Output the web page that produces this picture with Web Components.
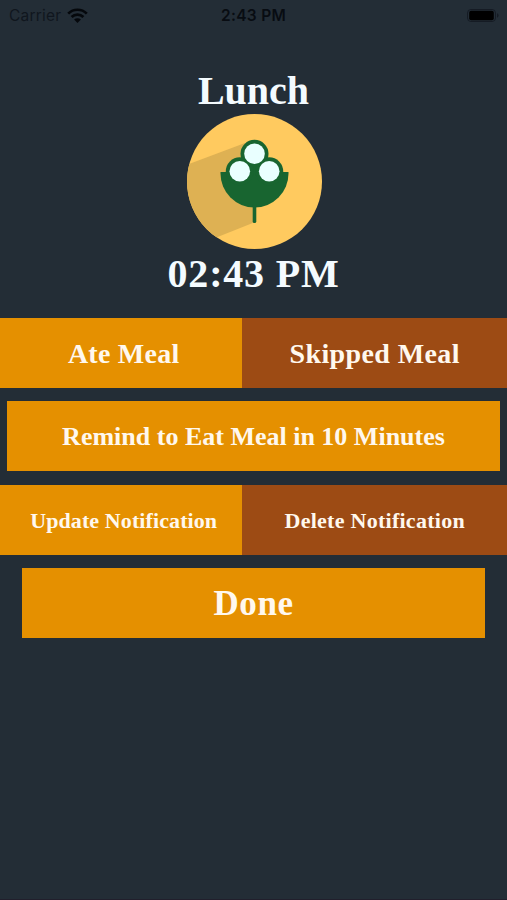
<!DOCTYPE html>
<html lang="en">
<head>
<meta charset="utf-8">
<meta name="viewport" content="width=device-width, initial-scale=1">
<title>Lunch</title>
<style>
    body {
        margin: 0;
        background: #232d36;
        font-family: "Liberation Serif", serif;
    }
</style>
</head>
<body>
<meal-screen>
    <status-bar slot="status" carrier="Carrier" time="2:43 PM"></status-bar>
    <meal-header name="Lunch" time="02:43 PM"><meal-icon></meal-icon></meal-header>
    <button-row>
        <meal-button size="28" spacing="0.25">Ate Meal</meal-button>
        <meal-button size="28" spacing="0.4" kind="danger">Skipped Meal</meal-button>
    </button-row>
    <button-row inset="7.4">
        <meal-button size="26">Remind to Eat Meal in 10 Minutes</meal-button>
    </button-row>
    <button-row>
        <meal-button size="22" spacing="0.1">Update Notification</meal-button>
        <meal-button size="22" spacing="0.27" kind="danger">Delete Notification</meal-button>
    </button-row>
    <button-row inset="22.4">
        <meal-button size="35" spacing="0.6">Done</meal-button>
    </button-row>
</meal-screen>

<script>
class MealScreen extends HTMLElement {
    constructor() {
        super();
        this.attachShadow({ mode: 'open' });
        this.shadowRoot.innerHTML = `
            <style>
                :host {
                    display: flex;
                    flex-direction: column;
                    box-sizing: border-box;
                    height: 100vh;
                    overflow: hidden;
                    border-bottom: 1px solid #211f2c;
                }
                .content {
                    display: flex;
                    flex-direction: column;
                    gap: 13.33px;
                }
            </style>
            <slot name="status"></slot>
            <div class="content"><slot></slot></div>
        `;
    }
}
customElements.define('meal-screen', MealScreen);

class StatusBar extends HTMLElement {
    connectedCallback() {
        this.attachShadow({ mode: 'open' });
        this.shadowRoot.innerHTML = `
            <style>
                :host {
                    display: grid;
                    grid-template-columns: 1fr auto 1fr;
                    align-items: center;
                    height: 30px;
                    box-sizing: border-box;
                    padding: 0 8px 0 9px;
                    font: 15.5px/30px Inter, sans-serif;
                    color: #080c12;
                }
                .carrier { display: flex; align-items: center; gap: 6px; color: #10161e; letter-spacing: 0.2px; }
                .time { font-weight: 600; font-size: 15.5px; letter-spacing: 0.3px; padding: 1px 1px 0 0; }
                .carrier span { padding-top: 1px; }
                .battery { justify-self: end; }
                svg { display: block; }
            </style>
            <div class="carrier">
                <span>${this.getAttribute('carrier')}</span>
                <svg width="21" height="15" viewBox="0 0 21 15">
                    <g fill="none" stroke="#05080c" stroke-width="2.7">
                        <path d="M1.2 5.6a13.2 13.2 0 0 1 18.6 0"/>
                        <path d="M4.6 9a8.4 8.4 0 0 1 11.8 0"/>
                    </g>
                    <path d="M7.1 11.5a4.9 4.9 0 0 1 6.8 0L10.5 14.9z" fill="#05080c"/>
                </svg>
            </div>
            <div class="time">${this.getAttribute('time')}</div>
            <svg class="battery" width="32" height="14" viewBox="0 0 32 14">
                <rect x=".5" y=".5" width="28" height="12" rx="3.5" fill="none" stroke="#151b24"/>
                <rect x="2.2" y="1.7" width="24.6" height="9.6" rx="2" fill="#000"/>
                <path d="M30 4.3v4.4q1.6-.6 1.6-2.2T30 4.3z" fill="#151b24"/>
            </svg>
        `;
    }
}
customElements.define('status-bar', StatusBar);

class MealHeader extends HTMLElement {
    connectedCallback() {
        this.attachShadow({ mode: 'open' });
        this.shadowRoot.innerHTML = `
            <style>
                :host {
                    display: flex;
                    flex-direction: column;
                    align-items: center;
                    box-sizing: border-box;
                    height: 274.67px;
                    padding-top: 38px;
                    color: #f4fbff;
                    font-size: 40px;
                    font-weight: bold;
                    line-height: 46px;
                }
                .time { margin-top: 2px; letter-spacing: 0.8px; }
            </style>
            <div class="name">${this.getAttribute('name')}</div>
            <slot></slot>
            <div class="time">${this.getAttribute('time')}</div>
        `;
    }
}
customElements.define('meal-header', MealHeader);

class MealIcon extends HTMLElement {
    constructor() {
        super();
        this.attachShadow({ mode: 'open' });
        this.shadowRoot.innerHTML = `
            <style>
                :host { display: block; width: 136px; height: 135px; }
                svg { display: block; margin-left: auto; }
            </style>
            <svg width="135" height="135" viewBox="0 0 135 135">
                <clipPath id="disc"><circle cx="67.5" cy="67.5" r="67.5"/></clipPath>
                <circle cx="67.5" cy="67.5" r="67.5" fill="#ffca5f"/>
                <path d="M58 29L-2 51.5V136L67 108.5V60z" fill="#deb153" clip-path="url(#disc)"/>
                <g fill="#186530">
                    <path d="M33.5 58h68v1.5a34 34 0 0 1-68 0z"/>
                    <path d="M60 48h15v12H60z"/>
                    <circle cx="67.5" cy="39.8" r="14"/>
                    <circle cx="52.8" cy="57.3" r="14"/>
                    <circle cx="82.2" cy="57.3" r="14"/>
                    <path d="M65.7 90h3.6v17.5q0 1.5-1.8 1.5t-1.8-1.5z"/>
                </g>
                <g fill="#e9ffff">
                    <circle cx="67.5" cy="39.8" r="10.3"/>
                    <circle cx="52.8" cy="57.3" r="10.3"/>
                    <circle cx="82.2" cy="57.3" r="10.3"/>
                </g>
            </svg>
        `;
    }
}
customElements.define('meal-icon', MealIcon);

class ButtonRow extends HTMLElement {
    connectedCallback() {
        this.attachShadow({ mode: 'open' });
        this.shadowRoot.innerHTML = `
            <style>
                :host {
                    display: flex;
                    height: 70px;
                    padding: 0 ${this.getAttribute('inset') || 0}px;
                }
                ::slotted(*) { flex: 1; }
                ::slotted(:first-child:not(:last-child)) {
                    flex: 0 0 242.4px;
                    --shift: 5px;
                }
            </style>
            <slot></slot>
        `;
    }
}
customElements.define('button-row', ButtonRow);

class MealButton extends HTMLElement {
    connectedCallback() {
        this.attachShadow({ mode: 'open' });
        this.shadowRoot.innerHTML = `
            <style>
                :host { display: flex; background: #e59000; }
                :host([kind="danger"]) { background: #9d4b14; }
                button {
                    flex: 1;
                    padding: 2px 0 0 var(--shift, 0);
                    border: none;
                    background: none;
                    color: #fff8ee;
                    font: bold ${this.getAttribute('size')}px "Liberation Serif", serif;
                    letter-spacing: ${this.getAttribute('spacing') || 0}px;
                    white-space: nowrap;
                    cursor: pointer;
                }
            </style>
            <button type="button"><slot></slot></button>
        `;
    }
}
customElements.define('meal-button', MealButton);
</script>
</body>
</html>
